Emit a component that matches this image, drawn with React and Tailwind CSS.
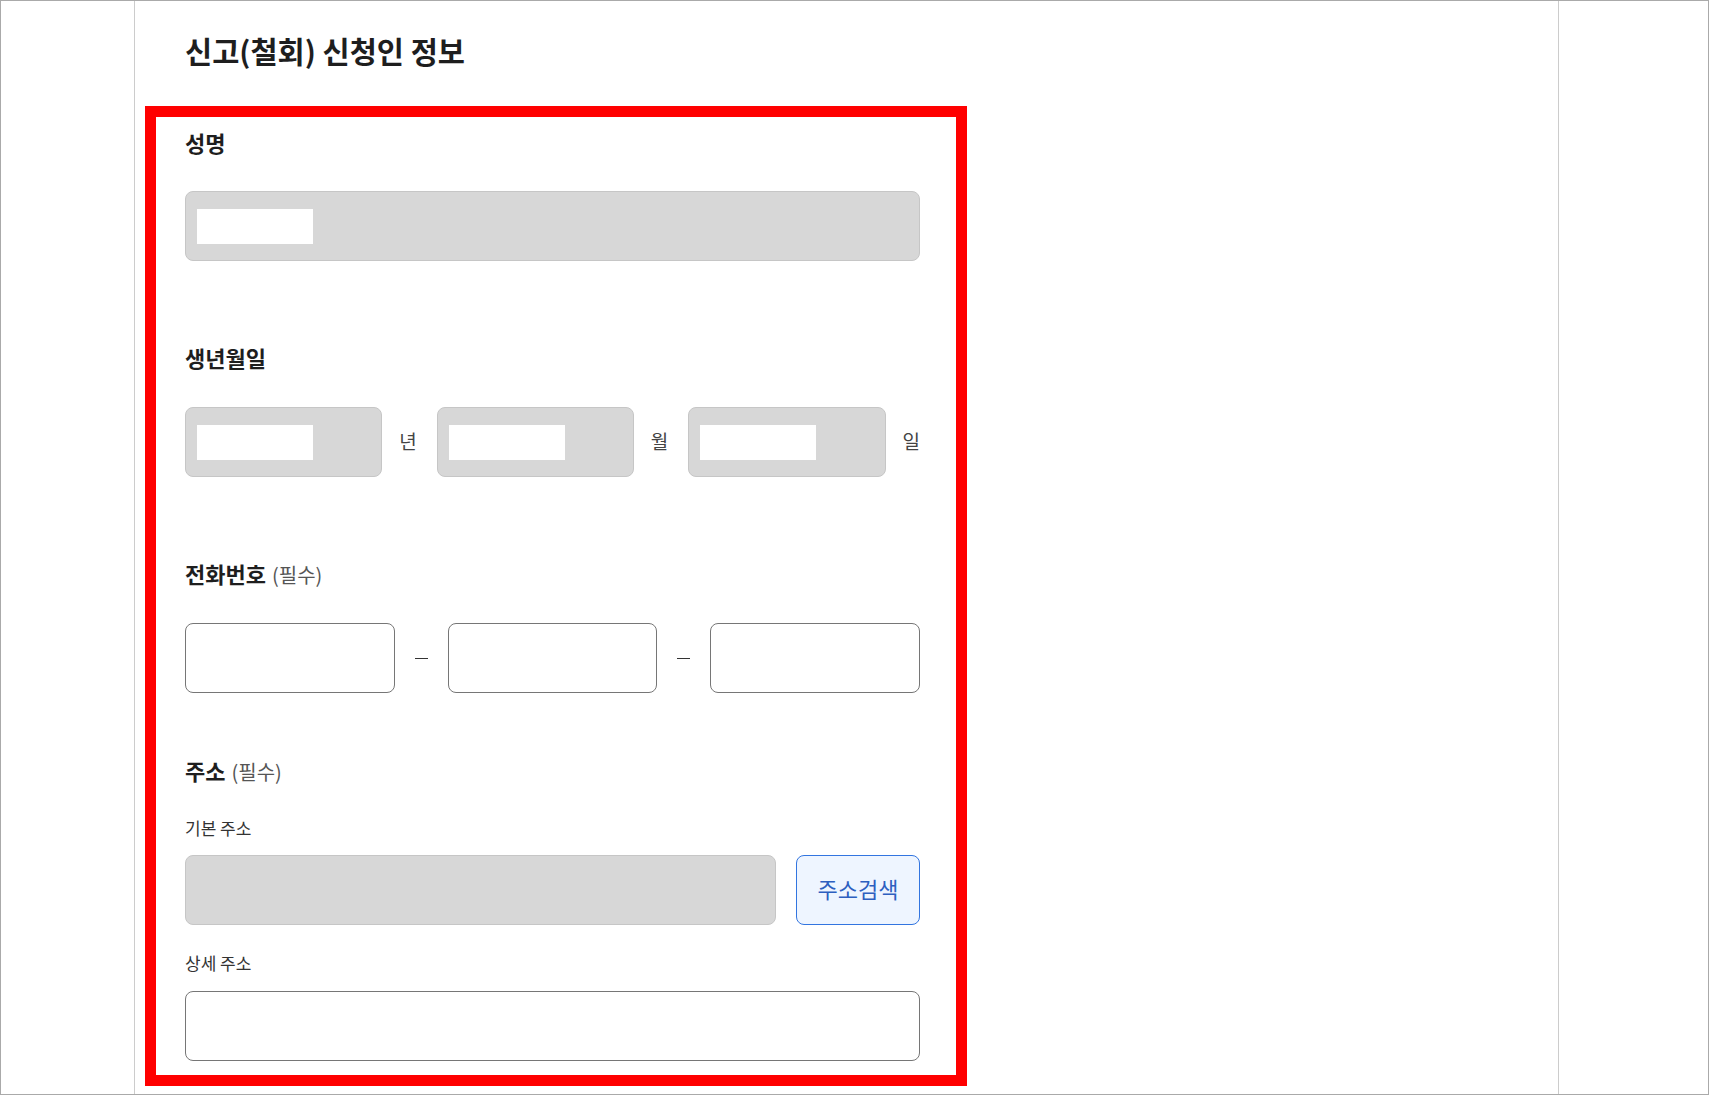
import React from 'react';

const font = { fontFamily: '"Noto Sans CJK KR", "Noto Sans", sans-serif' };

const Label = ({ children, required, className = '' }) => (
  <div className={`text-[22px] leading-[30px] font-bold text-[#1e1e1e] ${className}`}>
    {children}
    {required && <span className="ml-[6px] text-[20px] font-normal text-[#555]">(필수)</span>}
  </div>
);

const MaskedBox = ({ className = '' }) => (
  <div className={`h-[70px] rounded-[8px] border border-[#c6c6c6] bg-[#d7d7d7] pl-[11px] pt-[17px] ${className}`}>
    <div className="w-[116px] h-[35px] bg-white" />
  </div>
);

const TextBox = ({ className = '' }) => (
  <div className={`h-[70px] rounded-[8px] border border-[#767676] bg-white ${className}`} />
);

const DateGroup = ({ unit }) => (
  <div className="flex items-center gap-[17px]">
    <MaskedBox className="flex-1" />
    <span className="text-[19px] leading-[24px] -mt-[3px] text-[#444]">{unit}</span>
  </div>
);

const Dash = () => (
  <div className="w-[53px] flex justify-center">
    <div className="w-[13px] h-px bg-[#333]" />
  </div>
);

const App = () => {
  return (
    <div style={font} className="w-[1709px] h-[1095px] overflow-hidden bg-white border border-[#aaa] flex">
      <div className="w-[133px] shrink-0" />
      <div className="w-[1425px] shrink-0 border-x border-[#ccc]">
        <h1 className="pt-[29px] pl-[50px] text-[29.5px] leading-[40px] font-bold text-[#1e1e1e]">
          신고(철회) 신청인 정보
        </h1>

        <div className="mt-[36px] ml-[10px] w-[822px] border-[11px] border-[#ff0000] pl-[29px] pr-[36px] pt-[10px] pb-[14px]">
          <Label>성명</Label>
          <MaskedBox className="mt-[34px]" />

          <Label className="mt-[81px]">생년월일</Label>
          <div className="mt-[35px] grid grid-cols-3 gap-x-[20px]">
            <DateGroup unit="년" />
            <DateGroup unit="월" />
            <DateGroup unit="일" />
          </div>

          <Label className="mt-[81px]" required>전화번호</Label>
          <div className="mt-[33px] flex items-center">
            <TextBox className="flex-1" />
            <Dash />
            <TextBox className="flex-1" />
            <Dash />
            <TextBox className="flex-1" />
          </div>

          <Label className="mt-[62px]" required>주소</Label>
          <div className="mt-[29px] text-[17px] leading-[24px] text-[#333]">기본 주소</div>
          <div className="mt-[15px] flex gap-[20px]">
            <div className="flex-1 h-[70px] rounded-[8px] border border-[#c6c6c6] bg-[#d7d7d7]" />
            <button className="w-[124px] h-[70px] rounded-[8px] border border-[#3275e0] bg-[#eef5ff] text-[22px] pb-[4px] text-[#2d5fbf]">
              주소검색
            </button>
          </div>

          <div className="mt-[26px] text-[17px] leading-[24px] text-[#333]">상세 주소</div>
          <TextBox className="mt-[16px]" />
        </div>
      </div>
      <div className="flex-1" />
    </div>
  );
};

export default App;
